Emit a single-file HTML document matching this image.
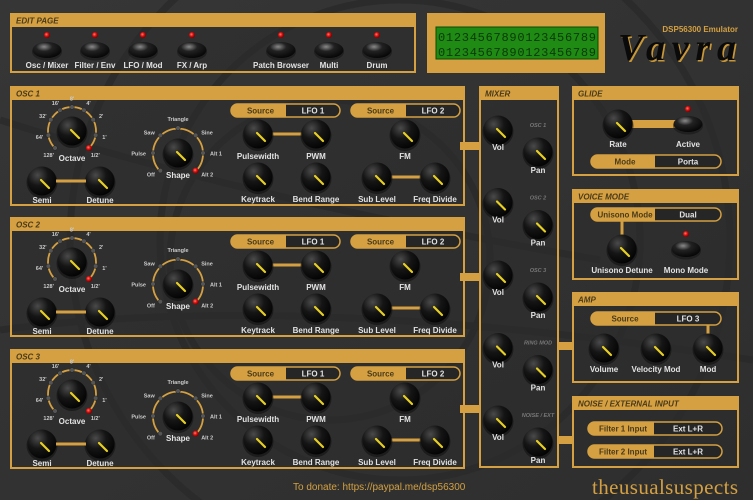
<!DOCTYPE html>
<html><head><meta charset="utf-8">
<style>
html,body{margin:0;padding:0;background:#333;width:753px;height:500px;overflow:hidden}
svg{display:block;position:absolute;left:0;top:0}
text{font-family:"Liberation Sans",sans-serif;font-weight:bold}
</style></head>
<body>
<svg id="s" width="753" height="500" viewBox="0 0 753 500" xmlns="http://www.w3.org/2000/svg">
<defs>
<radialGradient id="kg" cx="0.35" cy="0.3" r="0.8">
<stop offset="0" stop-color="#4a4a4a"/><stop offset="0.45" stop-color="#151515"/><stop offset="1" stop-color="#000"/>
</radialGradient>
<radialGradient id="bg" cx="0.4" cy="0.3" r="0.8">
<stop offset="0" stop-color="#8a8a8a"/><stop offset="0.35" stop-color="#222"/><stop offset="1" stop-color="#000"/>
</radialGradient>
<radialGradient id="led" cx="0.4" cy="0.4" r="0.6">
<stop offset="0" stop-color="#ff8070"/><stop offset="0.5" stop-color="#e01010"/><stop offset="1" stop-color="#700"/>
</radialGradient>
<linearGradient id="bgg" x1="0" y1="0" x2="1" y2="1">
<stop offset="0" stop-color="#363636"/><stop offset="1" stop-color="#2e2e2e"/>
</linearGradient>
</defs>
<rect width="753" height="500" fill="url(#bgg)"/>
<g fill="none" stroke="#2a2a2a" stroke-width="7" opacity="0.8">
<circle cx="400" cy="240" r="330"/>
<circle cx="400" cy="240" r="240"/>
<circle cx="330" cy="260" r="160"/>
<path d="M0 330 Q300 290 753 360"/>
<path d="M0 120 Q250 200 600 260"/>
</g>
<g id="g"></g>
</svg>
<script>
var G=document.getElementById('g'),GOLD='#d4a041',h='',LC='#e2e2e2';
function knob(x,y,lab,ly){h+='<circle cx="'+x+'" cy="'+(y+1.5)+'" r="15.5" fill="#111" opacity="0.6"/><circle cx="'+x+'" cy="'+y+'" r="14.5" fill="url(#kg)"/>'+
'<line x1="'+(x-1)+'" y1="'+(y-1)+'" x2="'+(x+7)+'" y2="'+(y+7)+'" stroke="#e8d020" stroke-width="2.2" stroke-linecap="round"/>';
if(lab)h+=txt(x,ly||y+22,lab,8,LC);}
function txt(x,y,t,s,c,a,st){return '<text x="'+x+'" y="'+y+'" font-size="'+s+'" fill="'+c+'" text-anchor="'+(a||'middle')+'"'+(st?' font-style="italic"':'')+'>'+t+'</text>';}
function panel(x,y,w,hh,title){h+='<rect x="'+(x+1)+'" y="'+(y+1)+'" width="'+(w-2)+'" height="'+(hh-2)+'" fill="#2c2c2c" fill-opacity="0.55" stroke="'+GOLD+'" stroke-width="2"/>'+
'<rect x="'+x+'" y="'+y+'" width="'+w+'" height="14" fill="'+GOLD+'"/>'+txt(x+6,y+10.5,title,8,'#4a3a1a','start',1);}
function line(x1,y1,x2,y2,w){h+='<line x1="'+x1+'" y1="'+y1+'" x2="'+x2+'" y2="'+y2+'" stroke="'+GOLD+'" stroke-width="'+(w||3)+'"/>';}
function pill(x,y,w,a,b,split){var hh=13;split=split||w/2;h+='<rect x="'+x+'" y="'+y+'" width="'+w+'" height="'+hh+'" rx="6.5" fill="#262626" stroke="'+GOLD+'" stroke-width="1.5"/>'+
'<path d="M'+(x+6.5)+' '+y+'H'+(x+split)+'V'+(y+hh)+'H'+(x+6.5)+'A6.5 6.5 0 0 1 '+(x+6.5)+' '+y+'Z" fill="'+GOLD+'"/>'+
txt(x+split/2+2,y+9.5,a,8,'#4a3a1a')+txt(x+split+(w-split)/2,y+9.5,b,8,LC);}
function led(x,y){h+='<circle cx="'+x+'" cy="'+y+'" r="3" fill="url(#led)"/>';}
function btn(x,y,lab,ly){led(x,y-15);h+='<ellipse cx="'+x+'" cy="'+(y+2)+'" rx="15" ry="8.5" fill="#111" opacity="0.5"/><ellipse cx="'+x+'" cy="'+y+'" rx="14.5" ry="8" fill="url(#bg)"/>';if(lab)h+=txt(x,ly||y+18,lab,8,LC);}
function dot(x,y){h+='<circle cx="'+x+'" cy="'+y+'" r="2.3" fill="#555" stroke="#222" stroke-width="0.5"/>';}

panel(10,13,406,60,'EDIT PAGE');
[[47,'Osc / Mixer'],[95,'Filter / Env'],[143,'LFO / Mod'],[192,'FX / Arp'],[281,'Patch Browser'],[329,'Multi'],[377,'Drum']].forEach(function(b){btn(b[0],50,b[1],68);});
h+='<rect x="427" y="13" width="178" height="60" fill="'+GOLD+'"/><rect x="436" y="27" width="162" height="32" fill="#1f8a14" stroke="#0d4a08"/>';
h+='<text x="438" y="41" font-size="12" fill="#0c3a08" style="font-family:Liberation Mono,monospace;font-weight:normal" textLength="158">01234567890123456789</text>';
h+='<text x="438" y="56" font-size="12" fill="#0c3a08" style="font-family:Liberation Mono,monospace;font-weight:normal" textLength="158">01234567890123456789</text>';
h+=txt(738,32,'DSP56300 Emulator',8,GOLD,'end');
h+='<text x="618" y="60" font-size="38" font-style="italic" style="font-family:Liberation Serif,serif" fill="#c89838" textLength="118" transform="translate(1.5,1.5)">Vavra</text>';
h+='<text x="618" y="60" font-size="38" font-style="italic" style="font-family:Liberation Serif,serif" fill="#0a0a0a" textLength="118">Vavra</text>';

function osc(y0,n){
 panel(10,y0,455,120,'OSC '+n);
 line(460,y0+60,479,y0+60,8);
 var cx=72,cy=y0+45;
 h+='<path d="M'+(cx-17)+' '+(cy+17)+' A24 24 0 1 1 '+(cx+17)+' '+(cy+17)+'" fill="none" stroke="'+GOLD+'" stroke-width="1.8"/>';
 var ol=[["128'",-135],["64'",-100],["32'",-62],["16'",-30],["8'",0],["4'",30],["2'",62],["1'",100],["1/2'",135]];
 ol.forEach(function(o,i){var a=o[1]*Math.PI/180,dx=Math.sin(a),dy=-Math.cos(a);
  if(i<8)dot(cx+24*dx,cy+24*dy);else led(cx+24*dx,cy+24*dy);
  h+=txt(cx+33*dx,cy+33*dy+2.5,o[0],5.5,'#ccc');});
 knob(cx,cy,'Octave',y0+75);
 knob(42,y0+95,'Semi',y0+117);knob(100,y0+95,'Detune',y0+117);line(56,y0+95,86,y0+95);
 var sx=178,sy=y0+67;
 h+='<path d="M'+(sx-18)+' '+(sy+18)+' A25 25 0 1 1 '+(sx+18)+' '+(sy+18)+'" fill="none" stroke="'+GOLD+'" stroke-width="1.8"/>';
 var sl=[['Off',-135,'end'],['Pulse',-90,'end'],['Saw',-45,'end'],['Triangle',0,'middle'],['Sine',45,'start'],['Alt 1',90,'start'],['Alt 2',135,'start']];
 sl.forEach(function(o,i){var a=o[1]*Math.PI/180,dx=Math.sin(a),dy=-Math.cos(a);
  if(i<6)dot(sx+25*dx,sy+25*dy);else led(sx+25*dx,sy+25*dy);
  var r=i==3?31:30;h+=txt(sx+r*dx+(o[2]=='end'?-2:o[2]=='start'?2:0),sy+r*dy+(i==3?-1:2.5),o[0],5.5,'#ccc',o[2]);});
 knob(sx,sy,'Shape',y0+92);
 pill(231,y0+18,109,'Source','LFO 1',55);pill(351,y0+18,109,'Source','LFO 2',55);
 line(272,y0+48,302,y0+48);line(391,y0+91,421,y0+91);
 knob(258,y0+48,'Pulsewidth',y0+73);knob(316,y0+48,'PWM',y0+73);knob(405,y0+48,'FM',y0+73);
 knob(258,y0+91,'Keytrack',y0+116);knob(316,y0+91,'Bend Range',y0+116);knob(377,y0+91,'Sub Level',y0+116);knob(435,y0+91,'Freq Divide',y0+116);
}
osc(86,1);osc(217,2);osc(349,3);

panel(479,86,80,382,'MIXER');
['OSC 1','OSC 2','OSC 3','RING MOD','NOISE / EXT'].forEach(function(l,i){var y=130+i*72.5;
 h+=txt(538,y-3,l,5.5,'#777','middle',1);knob(498,y,'Vol',y+20);knob(538,y+22,'Pan',y+43);});
line(559,346,572,346,8);line(559,440,572,440,8);
panel(572,86,167,90,'GLIDE');
line(632,124,676,124,8);knob(618,124,'Rate',147);btn(688,124,'Active',147);
pill(591,155,130,'Mode','Porta',64);
panel(572,189,167,91,'VOICE MODE');
pill(591,208,130,'Unisono Mode','Dual',64);line(622,221,622,236,3);
knob(622,249,'Unisono Detune',273);btn(686,249,'Mono Mode',273);
panel(572,292,167,91,'AMP');
pill(591,312,130,'Source','LFO 3',64);line(708,325,708,336,3);
knob(604,348,'Volume',372);knob(656,348,'Velocity Mod',372);knob(708,348,'Mod',372);
panel(572,396,167,72,'NOISE / EXTERNAL INPUT');
pill(588,422,134,'Filter 1 Input','Ext L+R',66);pill(588,445,134,'Filter 2 Input','Ext L+R',66);
h+='<text x="293" y="490" font-size="10" fill="'+GOLD+'" style="font-weight:normal">To donate: https://paypal.me/dsp56300</text>';
h+='<text x="592" y="494" font-size="21" fill="'+GOLD+'" style="font-family:Liberation Serif,serif;font-weight:normal" textLength="146">theusualsuspects</text>';
G.innerHTML=h;
</script>
</body></html>
